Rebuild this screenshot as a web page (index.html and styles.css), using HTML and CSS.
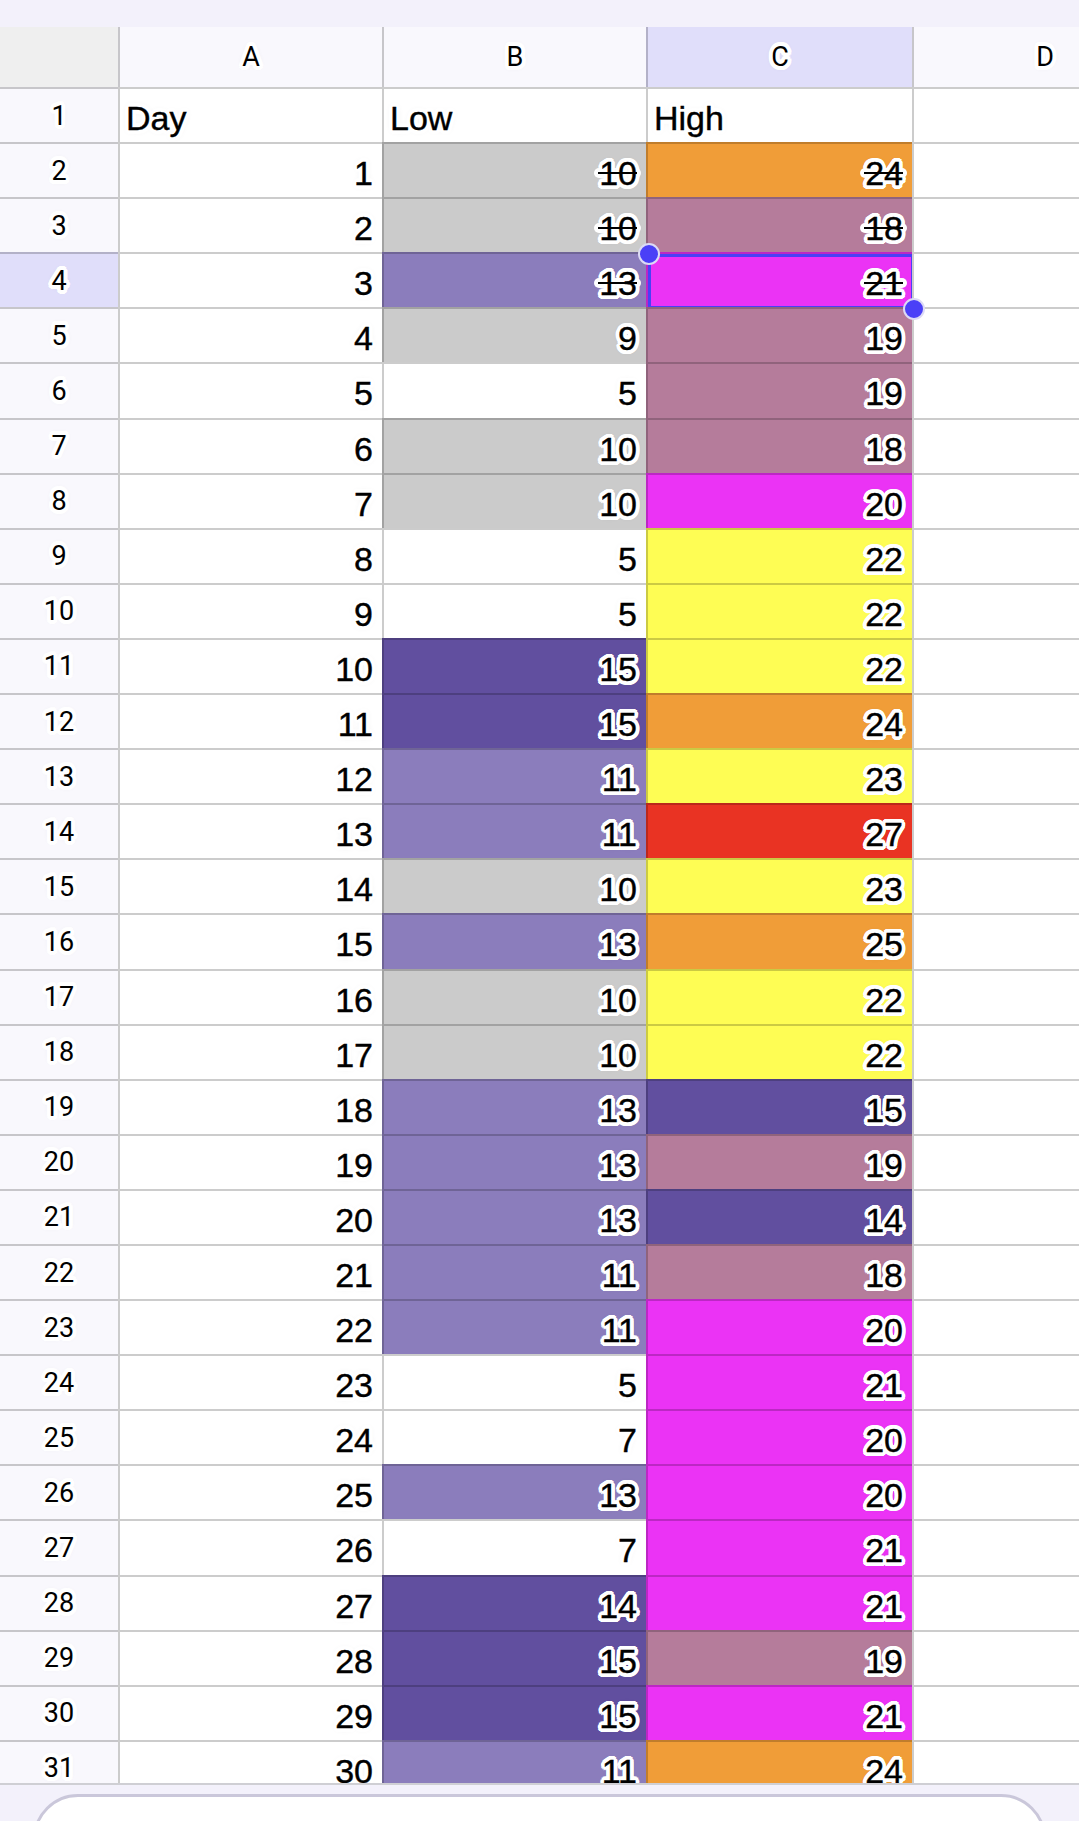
FILE: index.html
```html
<!DOCTYPE html>
<html lang="en">
<head>
<meta charset="UTF-8">
<meta name="viewport" content="width=device-width, initial-scale=1.0">
<title>Daily Temperatures</title>
<link rel="stylesheet" href="styles.css">
</head>
<body>
  <div class="app">
    <div class="topbar"></div>

    <div class="sheet-wrap">
      <div class="sheet">
        <!-- column headers -->
        <div class="corner"></div>
        <div class="col-hd">A</div>
        <div class="col-hd">B</div>
        <div class="col-hd active">C</div>
        <div class="col-hd">D</div>

        <div class="hd">1</div><div class="c">Day</div><div class="c">Low</div><div class="c">High</div><div class="c"></div>
        <div class="hd">2</div><div class="c n">1</div><div class="c n gray s"><span>10</span></div><div class="c n orange s"><span>24</span></div><div class="c"></div>
        <div class="hd">3</div><div class="c n">2</div><div class="c n gray s"><span>10</span></div><div class="c n mauve s"><span>18</span></div><div class="c"></div>
        <div class="hd active">4</div><div class="c n">3</div><div class="c n lav s"><span>13</span></div><div class="c n pink s sel"><span>21</span><i class="dot tl"></i><i class="dot br"></i></div><div class="c"></div>
        <div class="hd">5</div><div class="c n">4</div><div class="c n gray">9</div><div class="c n mauve">19</div><div class="c"></div>
        <div class="hd">6</div><div class="c n">5</div><div class="c n">5</div><div class="c n mauve">19</div><div class="c"></div>
        <div class="hd">7</div><div class="c n">6</div><div class="c n gray">10</div><div class="c n mauve">18</div><div class="c"></div>
        <div class="hd">8</div><div class="c n">7</div><div class="c n gray">10</div><div class="c n pink">20</div><div class="c"></div>
        <div class="hd">9</div><div class="c n">8</div><div class="c n">5</div><div class="c n yellow">22</div><div class="c"></div>
        <div class="hd">10</div><div class="c n">9</div><div class="c n">5</div><div class="c n yellow">22</div><div class="c"></div>
        <div class="hd">11</div><div class="c n">10</div><div class="c n ind">15</div><div class="c n yellow">22</div><div class="c"></div>
        <div class="hd">12</div><div class="c n">11</div><div class="c n ind">15</div><div class="c n orange">24</div><div class="c"></div>
        <div class="hd">13</div><div class="c n">12</div><div class="c n lav">11</div><div class="c n yellow">23</div><div class="c"></div>
        <div class="hd">14</div><div class="c n">13</div><div class="c n lav">11</div><div class="c n red">27</div><div class="c"></div>
        <div class="hd">15</div><div class="c n">14</div><div class="c n gray">10</div><div class="c n yellow">23</div><div class="c"></div>
        <div class="hd">16</div><div class="c n">15</div><div class="c n lav">13</div><div class="c n orange">25</div><div class="c"></div>
        <div class="hd">17</div><div class="c n">16</div><div class="c n gray">10</div><div class="c n yellow">22</div><div class="c"></div>
        <div class="hd">18</div><div class="c n">17</div><div class="c n gray">10</div><div class="c n yellow">22</div><div class="c"></div>
        <div class="hd">19</div><div class="c n">18</div><div class="c n lav">13</div><div class="c n ind">15</div><div class="c"></div>
        <div class="hd">20</div><div class="c n">19</div><div class="c n lav">13</div><div class="c n mauve">19</div><div class="c"></div>
        <div class="hd">21</div><div class="c n">20</div><div class="c n lav">13</div><div class="c n ind">14</div><div class="c"></div>
        <div class="hd">22</div><div class="c n">21</div><div class="c n lav">11</div><div class="c n mauve">18</div><div class="c"></div>
        <div class="hd">23</div><div class="c n">22</div><div class="c n lav">11</div><div class="c n pink">20</div><div class="c"></div>
        <div class="hd">24</div><div class="c n">23</div><div class="c n">5</div><div class="c n pink">21</div><div class="c"></div>
        <div class="hd">25</div><div class="c n">24</div><div class="c n">7</div><div class="c n pink">20</div><div class="c"></div>
        <div class="hd">26</div><div class="c n">25</div><div class="c n lav">13</div><div class="c n pink">20</div><div class="c"></div>
        <div class="hd">27</div><div class="c n">26</div><div class="c n">7</div><div class="c n pink">21</div><div class="c"></div>
        <div class="hd">28</div><div class="c n">27</div><div class="c n ind">14</div><div class="c n pink">21</div><div class="c"></div>
        <div class="hd">29</div><div class="c n">28</div><div class="c n ind">15</div><div class="c n mauve">19</div><div class="c"></div>
        <div class="hd">30</div><div class="c n">29</div><div class="c n ind">15</div><div class="c n pink">21</div><div class="c"></div>
        <div class="hd">31</div><div class="c n">30</div><div class="c n lav">11</div><div class="c n orange">24</div><div class="c"></div>
      </div>
    </div>

    <div class="bottombar">
      <div class="input"></div>
    </div>
  </div>
</body>
</html>
```

FILE: styles.css
```css
/* Spreadsheet view */
* {
  margin: 0;
  padding: 0;
  box-sizing: border-box;
}
body {
  width: 1079px;
  height: 1821px;
  overflow: hidden;
  background: #f3f1fb;
}
.app {
  display: flex;
  flex-direction: column;
  height: 1821px;
}
.topbar {
  flex: none;
  height: 27px;
  background: #f3f1fb;
}
.sheet-wrap {
  flex: 1;
  overflow: hidden;
  background: #fff;
}
.sheet {
  display: grid;
  grid-template-columns: 118px 264px 264px 266px 264px;
  grid-template-rows: 60px;
  grid-auto-rows: 55.1px;
  width: max-content;
}

/* white halo round every label, like the app draws it */
.corner, .col-hd, .hd, .c {
  color: #000;
  text-shadow:
    4px 0 0.5px #fff, -4px 0 0.5px #fff, 0 4px 0.5px #fff, 0 -4px 0.5px #fff,
    2.8px 2.8px 0.5px #fff, -2.8px 2.8px 0.5px #fff, 2.8px -2.8px 0.5px #fff, -2.8px -2.8px 0.5px #fff,
    3.7px 1.5px 0.5px #fff, -3.7px 1.5px 0.5px #fff, 3.7px -1.5px 0.5px #fff, -3.7px -1.5px 0.5px #fff,
    1.5px 3.7px 0.5px #fff, -1.5px 3.7px 0.5px #fff, 1.5px -3.7px 0.5px #fff, -1.5px -3.7px 0.5px #fff,
    2px 0 0 #fff, -2px 0 0 #fff, 0 2px 0 #fff, 0 -2px 0 #fff,
    0 0 7px rgba(0,0,0,0.14);
}

.corner {
  background: #efefef;
}
.col-hd {
  display: flex;
  align-items: center;
  justify-content: center;
  background: #f9f8fd;
  border-left: 2px solid rgba(0,0,0,0.2);
  font: 27px Roboto, "Liberation Sans", sans-serif;
}
.hd {
  display: flex;
  align-items: center;
  justify-content: center;
  background: #f9f8fd;
  border-top: 2px solid rgba(0,0,0,0.2);
  font: 27px Roboto, "Liberation Sans", sans-serif;
}
.col-hd.active, .hd.active {
  background: #e0defa;
}

.c {
  position: relative;
  background: #fff;
  border-top: 2px solid rgba(0,0,0,0.2);
  border-left: 2px solid rgba(0,0,0,0.2);
  padding: 6px 9px 0 6px;
  font: 34px/46px "Liberation Sans", Arial, sans-serif;
  -webkit-text-stroke: 0.4px #000;
  white-space: nowrap;
}
.c.n {
  text-align: right;
}

/* struck-through values: white band under the glyphs, black rule over them */
.s span {
  position: relative;
  z-index: 0;
}
.s span::before {
  content: "";
  position: absolute;
  z-index: -1;
  left: -5px;
  right: -4px;
  top: 13.5px;
  height: 10px;
  border-radius: 5px;
  background: #fff;
}
.s span::after {
  content: "";
  position: absolute;
  left: -1px;
  right: 0;
  top: 17.5px;
  height: 2.2px;
  background: #000;
}

/* fills */
.gray { background: #cbcbcb; }
.lav { background: #8b7dbc; }
.ind { background: #614f9f; }
.mauve { background: #b57c9b; }
.orange { background: #f09d38; }
.pink { background: #eb33f5; }
.yellow { background: #fefd54; }
.red { background: #e93323; }

/* selected cell */
.sel::after {
  content: "";
  position: absolute;
  top: 0;
  left: 0;
  right: -2px;
  bottom: -2px;
  border: 3px solid #4b3ff6;
}
.dot {
  position: absolute;
  z-index: 2;
  width: 22px;
  height: 22px;
  border-radius: 50%;
  background: #4a40f7;
  border: 2px solid #dcdaf5;
}
.dot.tl {
  top: -11px;
  left: -10px;
}
.dot.br {
  right: -13px;
  bottom: -13px;
}

.bottombar {
  flex: none;
  height: 38px;
  overflow: hidden;
  background: #f3f1fb;
  border-top: 2px solid #cfcfd4;
  padding: 9px 33px 0;
}
.bottombar .input {
  height: 90px;
  background: #fff;
  border: 3px solid #cac7da;
  border-radius: 56px;
}
```
